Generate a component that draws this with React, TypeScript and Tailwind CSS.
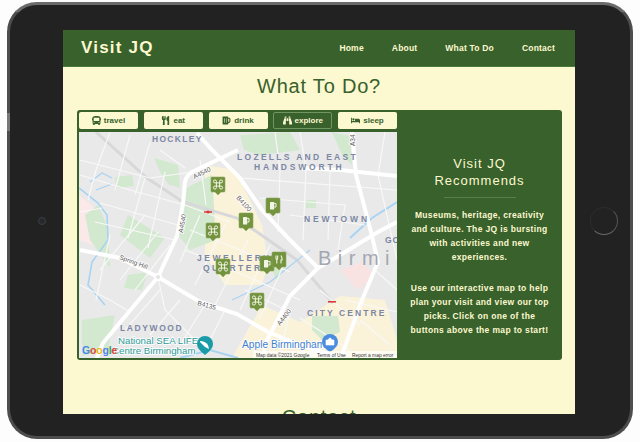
import { FaBus, FaUtensils, FaBeer, FaBinoculars, FaBed } from "react-icons/fa";

const navLinks = ["Home", "About", "What To Do", "Contact"];

const tabs = [
  { label: "travel", icon: FaBus },
  { label: "eat", icon: FaUtensils },
  { label: "drink", icon: FaBeer },
  { label: "explore", icon: FaBinoculars, active: true },
  { label: "sleep", icon: FaBed },
];

// map drawing uses page coordinates, viewBox starts at the map's corner
const bigRoads = [
  "M183 204 L185 182 Q186 176 192 172 L217 160 L238 150",
  "M183 204 L177 236 L158 277 L103 343 L96 360",
  "M80 250 L120 258 L158 277 L200 302 L237 314 L268 332",
  "M197 133 L212 150 L240 178 L262 210 L290 240 L318 268",
  "M318 268 L290 296 L267 340 L262 360",
  "M352 132 L356 175 L371 232 L378 262 L362 300 L340 360",
  "M300 168 L340 170 L397 176",
  "M318 268 L345 252 L378 232 L397 222",
  "M268 332 L300 345 L340 358",
];

const minorRoads = [
  "M80 160 L150 178 L192 172",
  "M80 175 L130 190 L185 205 L230 222",
  "M110 132 L96 170 L88 200",
  "M130 135 L115 190",
  "M150 142 L135 195",
  "M160 150 L185 168",
  "M145 178 L128 238",
  "M165 172 L148 248",
  "M100 203 L178 225",
  "M95 222 L175 240",
  "M80 212 L102 208",
  "M100 270 L145 215",
  "M120 280 L158 232",
  "M135 290 L170 245",
  "M80 285 L110 300 L130 312",
  "M160 290 L125 330",
  "M180 300 L150 335",
  "M158 277 L165 310 L200 345",
  "M205 305 L180 345",
  "M225 310 L205 350",
  "M190 230 L240 250 L290 272",
  "M185 250 L238 270",
  "M200 215 L180 262",
  "M225 225 L195 285",
  "M248 240 L215 305",
  "M270 245 L240 310",
  "M285 262 L260 318",
  "M245 290 L290 312",
  "M232 270 L300 300",
  "M300 132 L306 168 L303 240",
  "M275 132 L280 170",
  "M240 178 L397 190",
  "M280 170 L278 232",
  "M260 198 L345 205",
  "M290 215 L365 225",
  "M330 172 L328 240",
  "M345 205 L338 250",
  "M385 132 L378 175 L397 260",
  "M375 270 L397 290",
  "M345 300 L397 312",
  "M300 318 L350 350",
  "M320 290 L360 325",
  "M290 310 L280 355",
  "M360 320 L390 345",
  "M110 235 L96 300",
  "M200 160 L206 205",
];

const parks = [
  "M154 158 L178 165 L180 188 L168 184 L160 172 Z",
  "M115 177 L132 175 L134 186 L116 188 Z",
  "M98 205 L108 228 L110 268 L90 240 L85 215 Z",
  "M128 215 L165 238 L150 258 L120 235 Z",
  "M186 188 L212 175 L216 240 L190 250 L178 235 Z",
  "M240 135 L290 132 L300 150 L260 155 L244 150 Z",
  "M332 132 L350 136 L352 165 L342 155 Z",
  "M306 200 L316 200 L316 208 L306 208 Z",
  "M128 275 L148 272 L142 290 L124 288 Z",
  "M312 316 L338 316 L340 332 L322 340 L312 330 Z",
  "M270 262 L286 268 L276 280 Z",
  "M82 320 L115 315 L108 350 L82 356 Z",
];

function MuseumGlyph() {
  return (
    <path
      d="M-1.6 -1.6 V-3 A1.5 1.5 0 1 0 -3 -1.6 H3 A1.5 1.5 0 1 0 1.6 -3 V3 A1.5 1.5 0 1 0 3 1.6 H-3 A1.5 1.5 0 1 0 -1.6 3 Z"
      fill="none"
      stroke="#f1f5e4"
      strokeWidth="1"
    />
  );
}

function MugGlyph() {
  return (
    <g>
      <rect x="-3" y="-3.5" width="4.2" height="7.5" rx="0.6" fill="#f1f5e4" />
      <path d="M1.2 -2 H3 V1.5 H1.2" fill="none" stroke="#f1f5e4" strokeWidth="1" />
    </g>
  );
}

function ForkGlyph() {
  return (
    <path
      d="M-3 -4 V-1 Q-3 0 -2.2 0 V4 M-1.4 -4 V-1 Q-1.4 0 -2.2 0 M2 -4 Q3.2 -2 3 0.5 H2 V4"
      fill="none"
      stroke="#f1f5e4"
      strokeWidth="1.1"
    />
  );
}

function Pin({ x, y, kind }: { x: number; y: number; kind: "museum" | "mug" | "fork" }) {
  return (
    <g transform={`translate(${x} ${y})`}>
      <path
        d="M-7 -8 Q-7 -9 -6 -9 H6 Q7 -9 7 -8 V5 Q7 6 6 6 H3 L0 9 L-3 6 H-6 Q-7 6 -7 5 Z"
        fill="#73933f"
        stroke="#8eaa5c"
        strokeWidth="0.6"
      />
      <g transform="translate(0 -1.5)">
        {kind === "museum" && <MuseumGlyph />}
        {kind === "mug" && <MugGlyph />}
        {kind === "fork" && <ForkGlyph />}
      </g>
    </g>
  );
}

function MapView() {
  return (
    <svg viewBox="79 132 318 226" className="block w-[318px] h-[226px] shrink-0" aria-label="Map of the Jewellery Quarter">
      <rect x="79" y="132" width="318" height="226" fill="#e9e9ea" />
      <path d="M79 195 L100 212 L106 250 L79 240 Z" fill="#fbe8e8" />
      <path d="M340 270 L362 262 L375 275 L358 290 Z" fill="#f9e2e2" />
      <path d="M205 165 L235 170 L262 225 L268 262 L262 285 L225 285 L205 255 Z" fill="#fbf3d9" />
      <path d="M232 358 L262 305 L300 322 L340 296 L385 300 L397 340 L397 358 Z" fill="#faf3d9" />
      {parks.map((d) => (
        <path key={d} d={d} fill="#d3e9cf" />
      ))}
      <path d="M96 132 L147 178 L183 202 L237 218 L297 260 L333 303" fill="none" stroke="#d8d8da" strokeWidth="3" />
      <path d="M79 188 L98 203 L107 215 L108 240 L92 262 L88 285 L105 305" fill="none" stroke="#a9d3f2" strokeWidth="1.6" />
      <path d="M90 182 L102 173 L112 178 M96 190 L112 184" fill="none" stroke="#a9d3f2" strokeWidth="1.2" />
      <path d="M350 238 L372 218 L397 202" fill="none" stroke="#a9d3f2" strokeWidth="2" />
      <path d="M232 300 L270 282 L310 250" fill="none" stroke="#a9d3f2" strokeWidth="1.2" />
      <path d="M180 358 L210 350 L238 358" fill="none" stroke="#a9d3f2" strokeWidth="2" />
      {minorRoads.map((d) => (
        <path key={d} d={d} fill="none" stroke="#f8f8f8" strokeWidth="1.2" />
      ))}
      {bigRoads.map((d) => (
        <path key={d} d={d} fill="none" stroke="#fff" strokeWidth="4" />
      ))}
      <circle cx="158" cy="277" r="3" fill="#e4e4e4" stroke="#fff" strokeWidth="2" />

      <path d="M204 212 H212" stroke="#d83a3a" strokeWidth="1.5" />
      <circle cx="208" cy="212" r="1.6" fill="#d83a3a" />
      <rect x="328" y="301" width="8" height="1.6" fill="#d83a3a" />

      <g fill="#7c87a3" fontWeight="700" fontSize="8.5">
        <text x="152" y="142" letterSpacing="1.3">HOCKLEY</text>
        <text x="237" y="160" letterSpacing="2.3">LOZELLS AND EAST</text>
        <text x="254" y="170" letterSpacing="2.8">HANDSWORTH</text>
        <text x="304" y="222" letterSpacing="2.9">NEWTOWN</text>
        <text x="197" y="261" letterSpacing="2.5">JEWELLERY</text>
        <text x="203" y="271" letterSpacing="2.5">QUARTER</text>
        <text x="120" y="331" letterSpacing="1.6">LADYWOOD</text>
        <text x="307" y="316" letterSpacing="2.1">CITY CENTRE</text>
        <text x="385" y="243" letterSpacing="1">GO</text>
      </g>
      <text x="318" y="265" fill="#a3a6b0" fontSize="20" letterSpacing="6.5">Birmingham</text>

      <g fill="#555" fontSize="6.5" stroke="#fff" strokeWidth="1.6" paintOrder="stroke">
        <text transform="translate(186 193) rotate(-28)" x="14" y="-8">A4540</text>
        <text transform="translate(182 238) rotate(-80)" x="5" y="0">A4540</text>
        <text transform="translate(355 146) rotate(-90)">A34</text>
        <text transform="translate(236 198) rotate(48)">B4100</text>
        <text transform="translate(119 259) rotate(20)">Spring Hill</text>
        <text transform="translate(197 305) rotate(15)">B4135</text>
        <text transform="translate(280 326) rotate(-52)">A4400</text>
      </g>

      <Pin x={218} y={186} kind="museum" />
      <Pin x={213} y={232} kind="museum" />
      <Pin x={273} y={207} kind="mug" />
      <Pin x={246} y={222} kind="mug" />
      <Pin x={223} y={268} kind="museum" />
      <Pin x={267} y={265} kind="mug" />
      <Pin x={279} y={261} kind="fork" />
      <Pin x={257} y={302} kind="museum" />

      <g stroke="#fff" strokeWidth="1.6" paintOrder="stroke">
        <text x="118" y="344" fill="#2e9a96" fontSize="9.7">National SEA LIFE</text>
        <text x="112" y="354" fill="#2e9a96" fontSize="9.7">Centre Birmingham</text>
        <text x="242" y="348" fill="#3f7fd0" fontSize="10.2">Apple Birmingham</text>
      </g>
      <path d="M205 336 a8 8 0 0 1 8 8 q0 5 -8 11 q-8 -6 -8 -11 a8 8 0 0 1 8 -8 Z" fill="#1b9aa8" />
      <path d="M200 341 q5 0 8 4 l1 4 l-4 -2 l-5 -5 Z" fill="#fff" />
      <path d="M330 334 a8 8 0 0 1 8 8 q0 5 -8 10 q-8 -5 -8 -10 a8 8 0 0 1 8 -8 Z" fill="#4a8de0" />
      <path d="M326 340 h8 v5 h-8 Z M328 340 q2 -4 4 0" fill="#fff" stroke="#fff" strokeWidth="0.6" />

      <g fontSize="10.5" fontWeight="700">
        <text x="82" y="354" letterSpacing="-0.2">
          <tspan fill="#4a86e8">G</tspan>
          <tspan fill="#e0483a">o</tspan>
          <tspan fill="#f2b90f">o</tspan>
          <tspan fill="#4a86e8">g</tspan>
          <tspan fill="#3aa655">l</tspan>
          <tspan fill="#e0483a">e</tspan>
        </text>
      </g>
      <rect x="253" y="351" width="144" height="7" fill="#fff" fillOpacity="0.65" />
      <g fontSize="4.9" fill="#333">
        <text x="256" y="356.5">Map data ©2021 Google</text>
        <text x="317" y="356.5">Terms of Use</text>
        <text x="352" y="356.5">Report a map error</text>
      </g>
    </svg>
  );
}

export default function App() {
  return (
    <div className="w-[640px] h-[442px] overflow-hidden bg-[#fdfdfd] pl-[7px] pt-[2px] [font-family:'Liberation_Sans',Arial,sans-serif]">
      <div className="relative w-[626px] h-[437px] rounded-[30px] border-[3px] border-[#4d4d4d] border-t-[#6a6a6a] bg-[#222222] pl-[53px] pt-[25px]">
        <span className="absolute left-[28px] top-[212px] w-[8px] h-[8px] rounded-full border border-[#3c3f44] bg-[#26282b]" />
        <span className="absolute left-[580px] top-[202px] w-[28px] h-[28px] rounded-full border border-[#2c2c2c] border-b-[#6b6b6b] border-r-[#555555]" />
        <span className="absolute -left-[3px] top-[108px] w-[3px] h-[18px] bg-[#777777]" />

        <div className="w-[512px] h-[384px] overflow-hidden bg-[#fcf8d0]">
          <header className="flex h-[37px] items-center justify-between border-b border-[#4b7a3a] bg-[#38612b] pl-[18px] pr-[20px]">
            <h1 className="text-[17px] font-bold tracking-[1.2px] text-[#fdf8d0]">Visit JQ</h1>
            <nav className="flex gap-[28px] text-[8.5px] font-bold tracking-[0.2px] text-[#fdf8d0]">
              {navLinks.map((link) => (
                <a key={link}>{link}</a>
              ))}
            </nav>
          </header>

          <h2 className="mt-[7px] text-center text-[20px] leading-[24px] tracking-[0.8px] text-[#38612b]">What To Do?</h2>

          <section className="mx-[14px] mt-[12px] flex h-[250px] w-[485px] flex-col rounded-[3px] bg-[#38612b] py-[2px] pl-[2px]">
            <div className="flex h-[17px] gap-[5.75px]">
              {tabs.map((tab) => (
                <button
                  key={tab.label}
                  type="button"
                  className={`flex w-[59px] items-center justify-center gap-[3px] rounded-[2px] text-[8px] font-bold ${
                    tab.active
                      ? "border border-[#6f9560] bg-[#38612b] text-[#fdf8d0]"
                      : "bg-[#fcf8d0] text-[#38612b]"
                  }`}
                >
                  <tab.icon size={9} />
                  {tab.label}
                </button>
              ))}
            </div>
            <div className="mt-[3px] flex flex-1">
              <MapView />
              <div className="flex flex-1 flex-col items-center pt-[23px] text-center text-[#fdf8d0]">
                <h3 className="text-[13px] leading-[17px] tracking-[1px]">
                  Visit JQ
                  <br />
                  Recommends
                </h3>
                <hr className="mt-[8px] w-[72px] border-[#55804a]" />
                <p className="mt-[10px] text-[8.5px] font-bold leading-[14px] tracking-[0.35px]">
                  Museums, heritage, creativity
                  <br />
                  and culture. The JQ is bursting
                  <br />
                  with activities and new
                  <br />
                  experiences.
                </p>
                <p className="mt-[17px] text-[8.5px] font-bold leading-[14px] tracking-[0.35px]">
                  Use our interactive map to help
                  <br />
                  plan your visit and view our top
                  <br />
                  picks. Click on one of the
                  <br />
                  buttons above the map to start!
                </p>
              </div>
            </div>
          </section>

          <h2 className="mt-[45px] text-center text-[20px] leading-[24px] tracking-[0.8px] text-[#38612b]">Contact</h2>
        </div>
      </div>
    </div>
  );
}
